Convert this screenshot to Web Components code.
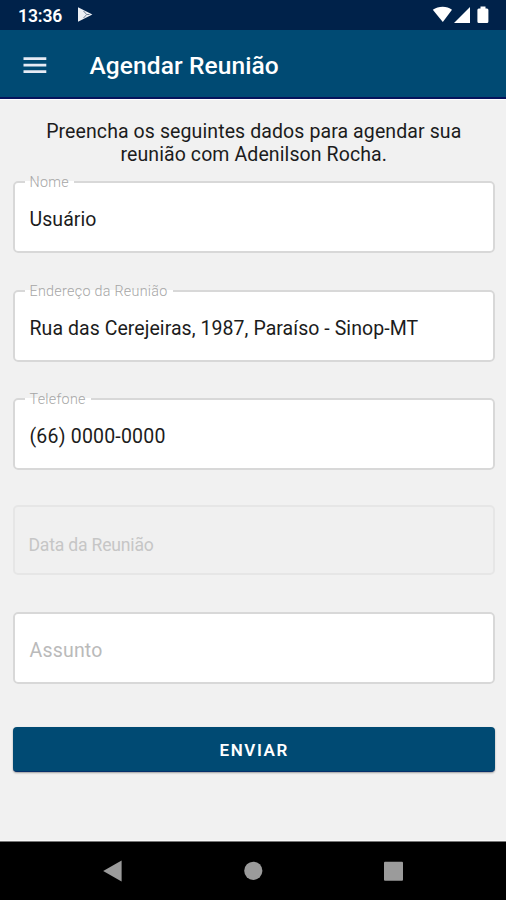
<!DOCTYPE html>
<html lang="pt-BR">
<head>
<meta charset="utf-8">
<title>Agendar Reunião</title>
<style>
  html, body { margin: 0; height: 100%; }
  body { font-family: Roboto, "Noto Sans", sans-serif; background: #f1f1f1; color: #1c1c1c; overflow: hidden; }
</style>
</head>
<body>
<meeting-screen></meeting-screen>
<script>
function define(name, html) {
  const template = document.createElement('template');
  template.innerHTML = html;
  customElements.define(name, class extends HTMLElement {
    constructor() {
      super();
      this.attachShadow({ mode: 'open' }).append(template.content.cloneNode(true));
    }
  });
}

define('status-bar', `
  <style>
    :host { display: flex; align-items: center; height: 30px; box-sizing: border-box; padding: 0 15px 0 18px; background: #00224a; color: #fff; }
    .time { font-size: 17.5px; font-weight: 600; line-height: 30px; letter-spacing: -.1px; margin-top: 2px; }
    .play { margin-left: 14.500px; }
    .system { margin-left: auto; }
    svg { display: block; }
  </style>
  <span class="time"><slot></slot></span>
  <svg class="play" width="17" height="18" viewBox="0 0 17 18">
    <path d="M1 1.200V15.800L15.400 8.500Z" fill="#eceff4"/>
    <path d="M6.500 5L9.700 8.500L6.500 12M9.700 8.500H12.500" fill="none" stroke="#6d7e95" stroke-width="1"/>
  </svg>
  <svg class="system" width="59" height="20" viewBox="0 0 59 20" fill="#fff">
    <path d="M0.8 4.8C6.500.800 15 .8 20 4.800L10.800 17Z"/>
    <path d="M38 2V18H22Z"/>
    <path d="M46 3.500H48.500V1.500H53.500V3.500H55Q56.400 3.500 56.400 5V16.500Q56.400 18 55 18H46.800Q45.400 18 45.400 16.500V5Q45.400 3.500 46.800 3.500Z"/>
  </svg>
`);

define('app-bar', `
  <style>
    :host { display: flex; align-items: center; height: 69px; box-sizing: border-box; padding: 2px 23px 0; gap: 42.500px; background: #004a73; border-bottom: 2px solid #06145c; box-shadow: 0 1px 0 #fff; color: #fff; }
    h1 { margin: 2px 0 0; font-size: 24.500px; font-weight: 500; line-height: 30px; letter-spacing: .1px; white-space: nowrap; }
    svg { display: block; }
  </style>
  <svg width="24" height="18" viewBox="0 0 24 18"><path d="M.5 2.700H23.300M.5 9.200H23.300M.5 15.700H23.300" stroke="#e6ebf5" stroke-width="2.700"/></svg>
  <h1><slot></slot></h1>
`);

define('form-field', `
  <style>
    :host { display: block; height: 72px; }
    fieldset { display: flex; align-items: center; position: relative; margin: 0; min-width: 0; height: 100%; box-sizing: border-box; padding: 6px 14.500px 0; border: 2px solid #d8d8d8; border-radius: 5px; background: #fff; font-size: 19.500px; line-height: 24px; letter-spacing: var(--tracking, .06px); white-space: nowrap; }
    /* The floating label interrupts the top outline. */
    .label { position: absolute; left: 10px; top: -10px; padding: 0 5px 0 4.500px; height: 16px; line-height: 18px; font-size: 14.300px; letter-spacing: .3px; font-weight: 300; color: #a6a6a6; background: linear-gradient(#f1f1f1 8px, #fff 8px); }
    :host(:not([floating])) .label { display: none; }
    :host([empty]) fieldset { color: #bababa; padding-top: 6px; }
    :host([disabled]) fieldset { background: #f0f0f0; border-color: #e6e6e6; color: #c6c6c6; padding-left: 13.500px; padding-top: 9px; font-size: 17.600px; letter-spacing: -.2px; }
  </style>
  <fieldset><span class="label"><slot name="label"></slot></span><span><slot></slot></span></fieldset>
`);

define('submit-button', `
  <style>
    :host { display: block; }
    button { display: block; width: 100%; height: 45px; padding: 2px 0 0 1px; border: 0; border-bottom: 1px solid #06306b; border-radius: 4px; background: #004a73; box-shadow: 0 1px 2px rgba(0,0,0,.35); color: #fff; font: 600 17px/24px Roboto, sans-serif; letter-spacing: 1.600px; }
  </style>
  <button type="button"><slot></slot></button>
`);

define('system-nav', `
  <style>
    :host { display: grid; grid-template-columns: repeat(3, 140.500px); justify-content: center; align-items: center; justify-items: center; height: 59px; box-sizing: border-box; background: #000; border-top: 1px solid #777; box-shadow: 0 -1px 0 #fafafa; }
    svg { display: block; fill: #9b9b9b; }
  </style>
  <svg width="20" height="22" viewBox="0 0 20 22"><path d="M.2 11L18.600.5V21.500Z"/></svg>
  <svg width="20" height="22" viewBox="0 0 20 22"><circle cx="10.300" cy="10.800" r="9.100"/></svg>
  <svg width="20" height="22" viewBox="0 0 20 22"><rect x="0" y="1.800" width="19" height="19" rx="1"/></svg>
`);

define('meeting-screen', `
  <style>
    :host { display: flex; flex-direction: column; width: 506px; height: 900px; }
    main { flex: 1; padding: 21px 11.500px 0 13px; }
    p { margin: 0 0 15px; text-align: center; font-size: 19.500px; line-height: 23px; letter-spacing: .1px; white-space: nowrap; }
    form { display: flex; flex-direction: column; gap: 36.700px; }
    form-field[disabled] { height: 70px; margin-top: -2px; }
    .phone { --tracking: .2px; }
    .subject { --tracking: .2px; margin-top: .5px; }
    submit-button { margin-top: 6.500px; }
  </style>
  <status-bar>13:36</status-bar>
  <app-bar>Agendar Reunião</app-bar>
  <main>
    <p>Preencha os seguintes dados para agendar sua<br>reunião com Adenilson Rocha.</p>
    <form>
      <form-field floating><span slot="label">Nome</span>Usuário</form-field>
      <form-field floating><span slot="label">Endereço da Reunião</span>Rua das Cerejeiras, 1987, Paraíso - Sinop-MT</form-field>
      <form-field class="phone" floating><span slot="label">Telefone</span>(66) 0000-0000</form-field>
      <form-field disabled>Data da Reunião</form-field>
      <form-field class="subject" empty>Assunto</form-field>
      <submit-button>ENVIAR</submit-button>
    </form>
  </main>
  <system-nav></system-nav>
`);
</script>
</body>
</html>
